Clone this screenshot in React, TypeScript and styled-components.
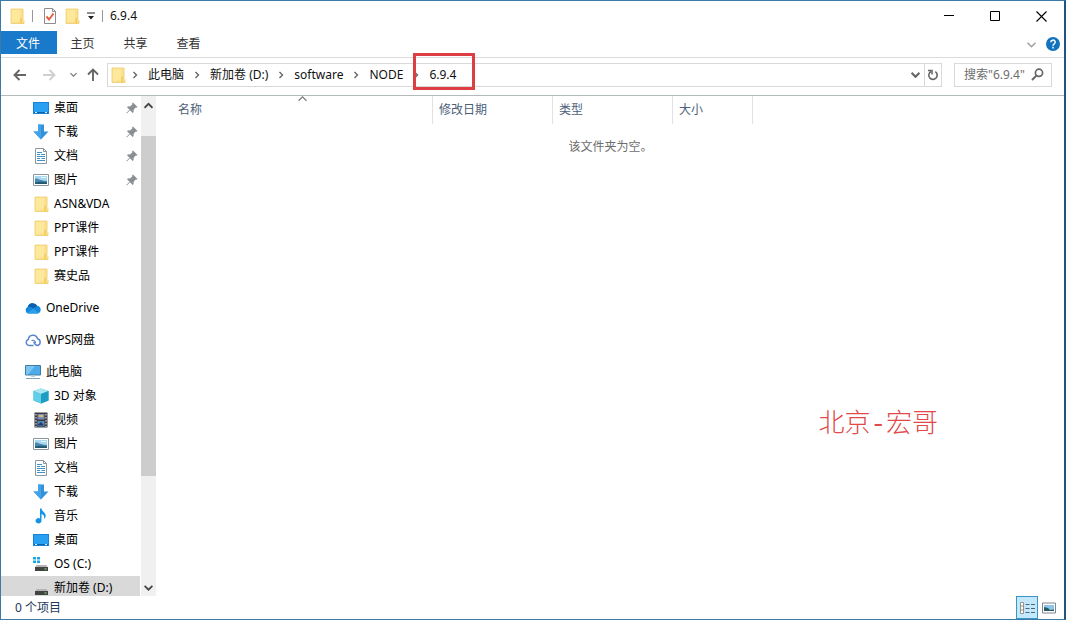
import React from "react";
import styled, { createGlobalStyle } from "styled-components";

const Global = createGlobalStyle`
  *, *::before, *::after { box-sizing: border-box; }
  body { margin: 0; }
  body, button, input, table {
    font-family: "Noto Sans", "Noto Sans CJK SC", sans-serif;
    font-size: 12px;
    line-height: 20px;
    color: #111;
  }
  button { padding: 0; border: 0; background: none; cursor: default; }
  svg { display: block; flex: none; }
  ul, ol { margin: 0; padding: 0; list-style: none; }
`;

const Window = styled.div`
  height: 100vh;
  display: flex;
  flex-direction: column;
  background: #fff;
  border: 1px solid #3c7ba6;
  border-right: 2px solid #1f5580;
`;

const TitleBar = styled.header`
  height: 30px;
  flex: none;
  display: flex;
  align-items: stretch;
  justify-content: space-between;
`;

const QuickAccess = styled.div`
  display: flex;
  align-items: center;
  padding-left: 8px;
`;

const QuickButton = styled.button<{ $width?: number }>`
  display: flex;
  align-items: center;
  justify-content: center;
  width: ${(p) => p.$width ?? 16}px;
  height: 22px;
`;

const Separator = styled.span<{ $before: number; $after: number }>`
  width: 1px;
  height: 12px;
  margin: 0 ${(p) => p.$after}px 0 ${(p) => p.$before}px;
  background: #999;
`;

const Title = styled.h1`
  margin: 0;
  font-size: 12px;
  font-weight: 400;
`;

const WindowControls = styled.div`
  display: flex;
`;

const ControlButton = styled.button`
  width: 46px;
  display: flex;
  align-items: center;
  justify-content: center;
`;

const Ribbon = styled.nav`
  height: 27px;
  flex: none;
  display: flex;
  align-items: flex-start;
  border-bottom: 1px solid #dadbdc;
`;

const Tab = styled.button<{ $primary?: boolean }>`
  width: ${(p) => (p.$primary ? 56 : 53)}px;
  height: 23px;
  padding: 2px 2px 0 0;
  background: ${(p) => (p.$primary ? "#1979ca" : "transparent")};
  color: ${(p) => (p.$primary ? "#fff" : "#333")};
`;

const RibbonTools = styled.div`
  margin-left: auto;
  height: 26px;
  display: flex;
  align-items: center;
  gap: 10px;
  padding-right: 4px;
`;

const AddressRow = styled.div`
  height: 38px;
  flex: none;
  display: flex;
  align-items: center;
  padding: 0 12px 4px 8px;
  border-bottom: 1px solid #b4bbbd;
`;

const NavButton = styled.button<{ $width: number }>`
  width: ${(p) => p.$width}px;
  height: 24px;
  display: flex;
  align-items: center;
  justify-content: center;
`;

const AddressBox = styled.div`
  flex: 1;
  height: 24px;
  display: flex;
  align-items: center;
  margin-right: 12px;
  padding-left: 2px;
  border: 1px solid #d9d9d9;
`;

const Crumbs = styled.ol`
  flex: 1;
  display: flex;
  align-items: center;
  margin-left: -4px;
`;

const Crumb = styled.li`
  position: relative;
  display: flex;
  align-items: center;
`;

const CrumbLink = styled.a`
  color: #111;
  text-decoration: none;
  white-space: nowrap;
`;

const ChevronSlot = styled.span`
  width: 26px;
  display: flex;
  justify-content: center;
`;

const Highlight = styled.span`
  position: absolute;
  inset: -12px -19px -5px 10px;
  border: 3px solid #dc3e42;
  pointer-events: none;
`;

const BoxButton = styled.button<{ $divided?: boolean }>`
  width: 17px;
  height: 22px;
  display: flex;
  align-items: center;
  justify-content: center;
  border-left: ${(p) => (p.$divided ? "1px solid #d9d9d9" : "0")};
`;

const SearchBox = styled.form`
  width: 98px;
  height: 24px;
  display: flex;
  align-items: center;
  padding: 0 7px 0 9px;
  border: 1px solid #d9d9d9;
`;

const SearchInput = styled.input`
  flex: 1;
  min-width: 0;
  height: 20px;
  padding: 0;
  border: 0;
  outline: 0;
  background: none;
  &::placeholder { color: #6d6d6d; opacity: 1; }
`;

const Body = styled.div`
  flex: 1;
  min-height: 0;
  display: flex;
`;

const Sidebar = styled.aside`
  width: 140px;
  flex: none;
  overflow: hidden;
  padding-right: 1px;
`;

const TreeItem = styled.li<{ $root?: boolean; $gap?: boolean; $selected?: boolean }>`
  display: flex;
  align-items: center;
  height: 24px;
  margin-top: ${(p) => (p.$gap ? 8 : 0)}px;
  padding: 0 2px 0 ${(p) => (p.$root ? 24 : 32)}px;
  background: ${(p) => (p.$selected ? "#d9d9d9" : "transparent")};
`;

const TreeLink = styled.a`
  flex: 1;
  display: flex;
  align-items: center;
  gap: 5px;
  color: #000;
  text-decoration: none;
  white-space: nowrap;
`;

const ScrollBar = styled.div`
  width: 15px;
  flex: none;
  display: flex;
  flex-direction: column;
  background: #f0f0f0;
`;

const ScrollButton = styled.button<{ $height: number }>`
  height: ${(p) => p.$height}px;
  flex: none;
  display: flex;
  align-items: center;
  justify-content: center;
`;

const ScrollTrack = styled.div`
  flex: 1;
  padding-top: 22px;
`;

const ScrollThumb = styled.div`
  height: 77%;
  background: #cdcdcd;
`;

const Content = styled.main`
  position: relative;
  flex: 1;
  min-width: 0;
  padding-left: 1px;
`;

const FileTable = styled.table`
  width: 100%;
  table-layout: fixed;
  border-collapse: separate;
  border-spacing: 0;
`;

const ColumnHead = styled.th<{ $width?: number; $first?: boolean }>`
  position: relative;
  width: ${(p) => (p.$width ? `${p.$width}px` : "auto")};
  height: 28px;
  padding: 0 0 0 ${(p) => (p.$first ? 21 : 6)}px;
  border-right: ${(p) => (p.$width ? "1px solid #e2e2e2" : "0")};
  color: #4c607a;
  font-weight: 400;
  text-align: left;
`;

const SortMark = styled.span`
  position: absolute;
  top: -2px;
  left: 0;
  right: 0;
  display: flex;
  justify-content: center;
  padding-left: 16px;
`;

const EmptyCell = styled.td`
  height: 46px;
  padding: 0;
  color: #6d6d6d;
  text-align: center;
`;

const Watermark = styled.p`
  position: absolute;
  right: 126px;
  bottom: 153px;
  margin: 0;
  font-family: "Liberation Mono", "Noto Sans CJK SC", monospace;
  font-size: 26px;
  font-weight: 300;
  line-height: 36px;
  color: #e0484a;
  white-space: nowrap;
`;

const StatusBar = styled.footer`
  height: 23px;
  flex: none;
  display: flex;
  align-items: center;
  justify-content: space-between;
  padding: 0 4px 0 14px;
  color: #1e395b;
`;

const ViewButtons = styled.div`
  display: flex;
`;

const ViewButton = styled.button<{ $active?: boolean }>`
  width: 22px;
  height: 23px;
  display: flex;
  align-items: center;
  justify-content: center;
  border: 1px solid ${(p) => (p.$active ? "#3c94c8" : "transparent")};
  background: ${(p) => (p.$active ? "#c4e8fb" : "transparent")};
`;

const FolderIcon = () => (
  <svg width="16" height="16" viewBox="0 0 16 16">
    <path d="M2 1h12v11l1 1v2.500H2z" fill="#fbe18c" />
    <path d="M2.500 1.500h8.500v11l-8.500 2z" fill="#fde89c" />
    <path d="M11.500 9.500l1.500 1v5h-1.500z" fill="#f2c85a" />
    <path d="M2 15.500V1h12v10.500l1 1v3z" fill="none" stroke="#edcb6c" strokeWidth=".8" />
  </svg>
);

const CheckDocIcon = () => (
  <svg width="14" height="16" viewBox="0 0 14 16">
    <path d="M1.500.5h8l3 3v12h-11z" fill="#fff" stroke="#8d8d8d" />
    <path d="M9.500.5v3h3" fill="none" stroke="#8d8d8d" />
    <path d="M3.500 8.500l2.500 3 4.500-6" fill="none" stroke="#e2603f" strokeWidth="2" />
  </svg>
);

const Chevron = ({ dir, color = "#666", size = 8, weight = 1.4 }: {
  dir: "up" | "down" | "right"; color?: string; size?: number; weight?: number;
}) => {
  const paths = { up: "M.5 6L4 2.500 7.500 6", down: "M.5 2.500L4 6l3.500-3.500", right: "M2.500 1l3 3-3 3" };
  return (
    <svg width={size} height={size} viewBox="0 0 8 8">
      <path d={paths[dir]} fill="none" stroke={color} strokeWidth={weight} />
    </svg>
  );
};

const ArrowIcon = ({ turn, color }: { turn: number; color: string }) => (
  <svg width="14" height="14" viewBox="0 0 14 14">
    <path d="M13 7H2M6.500 2L1.500 7l5 5" transform={`rotate(${turn} 7 7)`} fill="none" stroke={color} strokeWidth="1.900" />
  </svg>
);

const DesktopIcon = () => (
  <svg width="16" height="16" viewBox="0 0 16 16">
    <path d="M0 2h16v12H0z" fill="#1583d6" />
    <path d="M1 3h14v9H1z" fill="#29a1f2" />
    <path d="M1 12h14v1H1z" fill="#0b62a8" />
    <path d="M2 12h2v1H2zM12 12h2v1h-2z" fill="#d9efff" />
  </svg>
);

const DownloadIcon = () => (
  <svg width="16" height="16" viewBox="0 0 16 16">
    <path d="M5 .5h6v7h4.500L8 15.500.5 7.500H5z" fill="#3191dd" />
    <path d="M5 .5h3v15L.5 7.500H5z" fill="#46a2e8" />
  </svg>
);

const DocumentIcon = () => (
  <svg width="16" height="16" viewBox="0 0 16 16">
    <path d="M2.500.5h8l3 3v12h-11z" fill="#fff" stroke="#8b979f" />
    <path d="M10.500.5v3h3" fill="none" stroke="#8b979f" />
    <path d="M4 4.500h5M8 6.500h4M4 8.500h8M4 10.500h3M8.500 10.500H12M4 12.500h8" stroke="#3f93c9" />
    <path d="M4 6h3v1H4z" fill="#3f93c9" />
  </svg>
);

const PictureIcon = () => (
  <svg width="16" height="16" viewBox="0 0 16 16">
    <path d="M.5 2.500h15v11H.5z" fill="#fff" stroke="#8b979f" />
    <path d="M2 4h12v8H2z" fill="#a9d8f2" />
    <path d="M2 6.500c3-.5 4 1 6 1.500s4 1 6 1V12H2z" fill="#4487b0" />
    <path d="M2 10.500c4-1 8-1 12 0V12H2z" fill="#235a72" />
    <path d="M8 5h5v1H8z" fill="#e9f7ff" />
  </svg>
);

const CloudIcon = () => (
  <svg width="16" height="16" viewBox="0 0 16 16">
    <path d="M3.500 13.500A3.500 3.500 0 0 1 2.800 6.800 5.200 5.200 0 0 1 12.200 5.800a3.900 3.900 0 0 1 .3 7.700z" fill="#1488dc" />
    <path d="M2.800 6.800A5.200 5.200 0 0 1 12.200 5.800L8.500 8.500 6 7z" fill="#0b5fae" />
    <path d="M2 12.700l6.500-4.200 5.500 4.500c-.5.300-1 .5-1.500.5h-9c-.6 0-1-.3-1.500-.8z" fill="#2a9ee8" />
  </svg>
);

const WpsCloudIcon = () => (
  <svg width="16" height="16" viewBox="0 0 16 16">
    <path d="M8.500 13.500H4A3.100 3.100 0 0 1 3.300 7.500 4.700 4.700 0 0 1 12.500 6.800a3.500 3.500 0 0 1 .3 6.700c-2.500 0-3-1-4-3.500" fill="none" stroke="#5a86cb" strokeWidth="1.500" strokeLinejoin="round" />
    <path d="M6.500 8.500c2-.5 3.500.3 4.200 2.500" fill="none" stroke="#5a86cb" strokeWidth="1.200" />
  </svg>
);

const ComputerIcon = () => (
  <svg width="16" height="16" viewBox="0 0 16 16">
    <path d="M.5 1.500h15v9.500H.5z" fill="#4dabea" stroke="#3d7ca5" />
    <path d="M1 2h9L3 10.500H1z" fill="#7cc6f3" />
    <path d="M6 11.500h4V13H6z" fill="#c0cfd8" />
    <path d="M1 14.500h14" stroke="#7fa5bd" />
  </svg>
);

const CubeIcon = () => (
  <svg width="16" height="16" viewBox="0 0 16 16">
    <path d="M8 .5L15.500 3v9.500L8 15.500.5 12.500V3z" fill="#38b6d8" />
    <path d="M8 .5L15.500 3 8 6 .5 3z" fill="#a9e8f3" />
    <path d="M.5 3L8 6v9.500l-7.500-3z" fill="#61cfe5" />
    <path d="M8 6l7.500-3v9.500l-7.500 3z" fill="#1d9cc4" />
  </svg>
);

const VideoIcon = () => (
  <svg width="16" height="16" viewBox="0 0 16 16">
    <path d="M1.500.5h13v15h-13z" fill="#3a3a42" />
    <path d="M4.500 2h7v5.500h-7z" fill="#7c8bb8" />
    <path d="M4.500 9h7v5.500h-7z" fill="#5687b7" />
    <path d="M6 3h4v2H6z" fill="#e1bd59" />
    <path d="M5 12.500l3-2.500 3 3.500H5z" fill="#213c69" />
    <path d="M3 2v13M13 2v13" stroke="#f1f1f1" strokeDasharray="1.500 1.500" />
  </svg>
);

const MusicIcon = () => (
  <svg width="16" height="16" viewBox="0 0 16 16">
    <path d="M7 .5h1.500c.3 3 4.500 4 4.200 7.500-.1 1.500-.8 2.300-1.700 3 .8-3-.8-4.500-2.500-5v6.500A3 2.700 0 1 1 7 10.400z" fill="#1595e5" />
  </svg>
);

const DriveIcon = ({ system }: { system?: boolean }) => (
  <svg width="16" height="16" viewBox="0 0 16 16">
    {system && <path d="M0 1h3v2.500H0zM4 1h3v2.500H4zM0 4.500h3V7H0zM4 4.500h3V7H4z" fill="#19a8e5" />}
    <path d="M3.500 9h10l1 2h-12z" fill="#b4b4b4" />
    <path d="M2 11h13v4H2z" fill="#434343" />
    <path d="M11.500 12.500h2v1h-2z" fill="#8fe27e" />
  </svg>
);

const PinIcon = () => (
  <svg width="12" height="12" viewBox="0 0 12 12">
    <path d="M7 .5L11.500 5l-1 .8-.8-.2L7.500 8l.2 2-1 1L4 8.300.8 11.500l-.5-.5L3.500 7.800 1 5.200l1-1 2 .2 2.400-2.200L6.200 1.300z" fill="#8a8f93" />
  </svg>
);

const RefreshIcon = () => (
  <svg width="12" height="12" viewBox="0 0 12 12">
    <path d="M8.300 2.700A4.200 4.200 0 1 1 4 2.500" fill="none" stroke="#666" strokeWidth="1.600" />
    <path d="M1 1.500h4v4" fill="none" stroke="#666" strokeWidth="1.500" />
  </svg>
);

const SearchIcon = () => (
  <svg width="13" height="13" viewBox="0 0 13 13">
    <circle cx="8" cy="4.800" r="3.600" fill="none" stroke="#666" strokeWidth="1.700" />
    <path d="M5.500 7.500L1 12" stroke="#666" strokeWidth="2" />
  </svg>
);

type Item = { label: string; icon: React.ReactNode; root?: boolean; gap?: boolean; pinned?: boolean; selected?: boolean };

const items: Item[] = [
  { label: "桌面", icon: <DesktopIcon />, pinned: true },
  { label: "下载", icon: <DownloadIcon />, pinned: true },
  { label: "文档", icon: <DocumentIcon />, pinned: true },
  { label: "图片", icon: <PictureIcon />, pinned: true },
  { label: "ASN&VDA", icon: <FolderIcon /> },
  { label: "PPT课件", icon: <FolderIcon /> },
  { label: "PPT课件", icon: <FolderIcon /> },
  { label: "赛史品", icon: <FolderIcon /> },
  { label: "OneDrive", icon: <CloudIcon />, root: true, gap: true },
  { label: "WPS网盘", icon: <WpsCloudIcon />, root: true, gap: true },
  { label: "此电脑", icon: <ComputerIcon />, root: true, gap: true },
  { label: "3D 对象", icon: <CubeIcon /> },
  { label: "视频", icon: <VideoIcon /> },
  { label: "图片", icon: <PictureIcon /> },
  { label: "文档", icon: <DocumentIcon /> },
  { label: "下载", icon: <DownloadIcon /> },
  { label: "音乐", icon: <MusicIcon /> },
  { label: "桌面", icon: <DesktopIcon /> },
  { label: "OS (C:)", icon: <DriveIcon system /> },
  { label: "新加卷 (D:)", icon: <DriveIcon />, selected: true },
];

const path = ["此电脑", "新加卷 (D:)", "software", "NODE", "6.9.4"];

export default function App() {
  return (
    <>
      <Global />
      <Window>
        <TitleBar>
          <QuickAccess>
            <FolderIcon />
            <Separator $before={7} $after={9} />
            <QuickButton aria-label="属性"><CheckDocIcon /></QuickButton>
            <QuickButton $width={28} aria-label="新建文件夹"><FolderIcon /></QuickButton>
            <QuickButton $width={10} aria-label="自定义快速访问工具栏">
              <svg width="8" height="8" viewBox="0 0 8 8">
                <path d="M0 .5h8v1H0zM1 4h6L4 7.500z" fill="#222" />
              </svg>
            </QuickButton>
            <Separator $before={6} $after={7} />
            <Title>6.9.4</Title>
          </QuickAccess>
          <WindowControls>
            <ControlButton aria-label="最小化">
              <svg width="10" height="10" viewBox="0 0 10 10"><path d="M0 4.500h10" stroke="#000" /></svg>
            </ControlButton>
            <ControlButton aria-label="最大化">
              <svg width="10" height="10" viewBox="0 0 10 10"><path d="M.5.5h9v9h-9z" fill="none" stroke="#000" /></svg>
            </ControlButton>
            <ControlButton aria-label="关闭">
              <svg width="11" height="11" viewBox="0 0 11 11"><path d="M.5.5l10 10M10.500.5l-10 10" stroke="#000" strokeWidth="1.100" /></svg>
            </ControlButton>
          </WindowControls>
        </TitleBar>

        <Ribbon>
          <Tab $primary>文件</Tab>
          <Tab>主页</Tab>
          <Tab>共享</Tab>
          <Tab>查看</Tab>
          <RibbonTools>
            <button aria-label="展开功能区"><Chevron dir="down" color="#a0a0a0" size={9} /></button>
            <button aria-label="帮助">
              <svg width="14" height="14" viewBox="0 0 14 14">
                <circle cx="7" cy="7" r="7" fill="#1172bd" />
                <path d="M4.800 5.200a2.200 2.100 0 1 1 3.200 1.900c-.7.400-1 .7-1 1.600M7 9.800v1.600" fill="none" stroke="#fff" strokeWidth="1.500" />
              </svg>
            </button>
          </RibbonTools>
        </Ribbon>

        <AddressRow>
          <NavButton $width={22} aria-label="后退"><ArrowIcon turn={0} color="#666" /></NavButton>
          <NavButton $width={36} aria-label="前进"><ArrowIcon turn={180} color="#d0d0d0" /></NavButton>
          <NavButton $width={12} aria-label="最近浏览的位置"><Chevron dir="down" color="#777" size={7} /></NavButton>
          <NavButton $width={28} aria-label="上移"><ArrowIcon turn={90} color="#666" /></NavButton>
          <AddressBox>
            <FolderIcon />
            <Crumbs>
              {path.map((name, i) => (
                <Crumb key={name}>
                  <ChevronSlot><Chevron dir="right" /></ChevronSlot>
                  <CrumbLink href="#">{name}</CrumbLink>
                  {i === path.length - 1 && <Highlight />}
                </Crumb>
              ))}
            </Crumbs>
            <BoxButton aria-label="以前的位置"><Chevron dir="down" color="#666" size={9} weight={1.8} /></BoxButton>
            <BoxButton $divided aria-label="刷新"><RefreshIcon /></BoxButton>
          </AddressBox>
          <SearchBox role="search">
            <SearchInput type="text" aria-label="搜索" placeholder={'搜索"6.9.4"'} />
            <SearchIcon />
          </SearchBox>
        </AddressRow>

        <Body>
          <Sidebar>
            <ul>
              {items.map((it, i) => (
                <TreeItem key={i} $root={it.root} $gap={it.gap} $selected={it.selected}>
                  <TreeLink href="#">{it.icon}{it.label}</TreeLink>
                  {it.pinned && <PinIcon />}
                </TreeItem>
              ))}
            </ul>
          </Sidebar>
          <ScrollBar>
            <ScrollButton $height={18} aria-label="向上滚动"><Chevron dir="up" color="#444" size={9} weight={1.6} /></ScrollButton>
            <ScrollTrack><ScrollThumb /></ScrollTrack>
            <ScrollButton $height={18} aria-label="向下滚动"><Chevron dir="down" color="#444" size={9} weight={1.6} /></ScrollButton>
          </ScrollBar>
          <Content>
            <FileTable>
              <thead>
                <tr>
                  <ColumnHead $width={276} $first>
                    名称
                    <SortMark>
                      <Chevron dir="up" color="#777" size={9} weight={1} />
                    </SortMark>
                  </ColumnHead>
                  <ColumnHead $width={120}>修改日期</ColumnHead>
                  <ColumnHead $width={120}>类型</ColumnHead>
                  <ColumnHead $width={80}>大小</ColumnHead>
                  <ColumnHead as="td" />
                </tr>
              </thead>
              <tbody>
                <tr><EmptyCell colSpan={5}>该文件夹为空。</EmptyCell></tr>
              </tbody>
            </FileTable>
            <Watermark>北京-宏哥</Watermark>
          </Content>
        </Body>

        <StatusBar>
          <span>0 个项目</span>
          <ViewButtons>
            <ViewButton $active aria-label="详细信息">
              <svg width="17" height="14" viewBox="0 0 17 14">
                <path d="M1.500 1.500h3v11h-3zM1.500 5h3M1.500 9h3" fill="#fff" stroke="#8b8b7c" strokeWidth=".9" />
                <path d="M6.500 3.500h4M12 3.500h4M6.500 7.500h4M12 7.500h4M6.500 11.500h4M12 11.500h4" stroke="#4e6577" />
              </svg>
            </ViewButton>
            <ViewButton aria-label="大图标">
              <svg width="14" height="12" viewBox="0 0 14 12">
                <path d="M.5 1h13v10H.5z" fill="#fff" stroke="#7d8790" />
                <path d="M2 3h10v6H2z" fill="#8fc3ea" />
                <path d="M2 5l4 1 2 2 4-.5V9H2z" fill="#275a5e" />
              </svg>
            </ViewButton>
          </ViewButtons>
        </StatusBar>
      </Window>
    </>
  );
}
